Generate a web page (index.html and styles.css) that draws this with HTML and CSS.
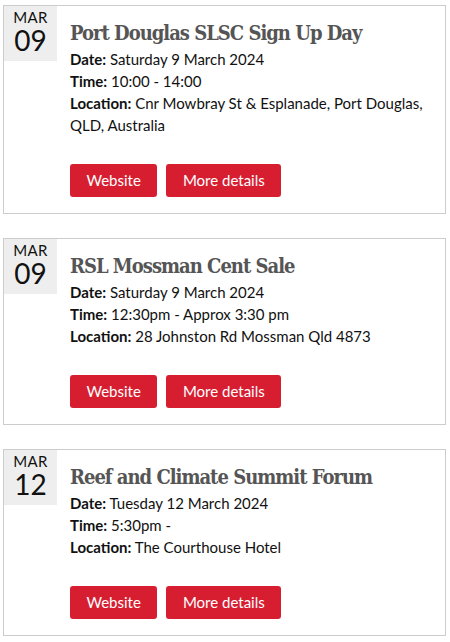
FILE: index.html
```html
<!DOCTYPE html>
<html lang="en">
<head>
<meta charset="utf-8">
<title>Events</title>
<link rel="stylesheet" href="styles.css">
</head>
<body>
<div class="events">
  <div class="event">
    <div class="datebox"><span class="month">MAR</span><span class="day">09</span></div>
    <div class="info">
      <h2 class="title">Port Douglas SLSC Sign Up Day</h2>
      <p class="line"><b>Date:</b> Saturday 9 March 2024</p>
      <p class="line"><b>Time:</b> 10:00 - 14:00</p>
      <p class="line"><b>Location:</b> Cnr Mowbray St &amp; Esplanade, Port Douglas, QLD, Australia</p>
      <div class="actions"><a class="btn" href="#">Website</a><a class="btn" href="#">More details</a></div>
    </div>
  </div>
  <div class="event">
    <div class="datebox"><span class="month">MAR</span><span class="day">09</span></div>
    <div class="info">
      <h2 class="title">RSL Mossman Cent Sale</h2>
      <p class="line"><b>Date:</b> Saturday 9 March 2024</p>
      <p class="line"><b>Time:</b> 12:30pm - Approx 3:30 pm</p>
      <p class="line"><b>Location:</b> 28 Johnston Rd Mossman Qld 4873</p>
      <div class="actions"><a class="btn" href="#">Website</a><a class="btn" href="#">More details</a></div>
    </div>
  </div>
  <div class="event">
    <div class="datebox"><span class="month">MAR</span><span class="day">12</span></div>
    <div class="info">
      <h2 class="title">Reef and Climate Summit Forum</h2>
      <p class="line"><b>Date:</b> Tuesday 12 March 2024</p>
      <p class="line"><b>Time:</b> 5:30pm - </p>
      <p class="line"><b>Location:</b> The Courthouse Hotel</p>
      <div class="actions"><a class="btn" href="#">Website</a><a class="btn" href="#">More details</a></div>
    </div>
  </div>
</div>
</body>
</html>
```
FILE: styles.css
```css
html, body { margin: 0; background: #fff; }
body { padding: 5px 4px 0 3px; font-family: Lato, "Open Sans", sans-serif; color: #111; }
.events { display: flex; flex-direction: column; gap: 24px; }
.event { display: flex; align-items: flex-start; border: 1px solid #ccc; }
.datebox {
  flex: 0 0 53px; height: 55px; box-sizing: border-box; padding-top: 3px;
  background: #eee; display: flex; flex-direction: column; align-items: center;
  color: #111;
}
.month { font-size: 15px; line-height: 17px; letter-spacing: 0.4px; }
.day { font-size: 28px; line-height: 28px; }
.info { flex: 1; margin-left: 13px; padding: 15px 8px 16px 0; }
.title {
  margin: 0 0 3px; font-family: "DejaVu Serif", serif; font-stretch: condensed;
  font-weight: bold; font-size: 20px; line-height: 24px; letter-spacing: -1px; color: #555;
}
.line { margin: 0; font-size: 15px; line-height: 22px; }
.line b { font-weight: bold; }
.actions { display: flex; gap: 9px; margin-top: 28px; }
.btn {
  display: block; height: 33px; line-height: 33px; padding: 0 16.5px; border-radius: 3px;
  background: #d71e31; color: #fff; text-decoration: none; font-size: 15px;
}
```
